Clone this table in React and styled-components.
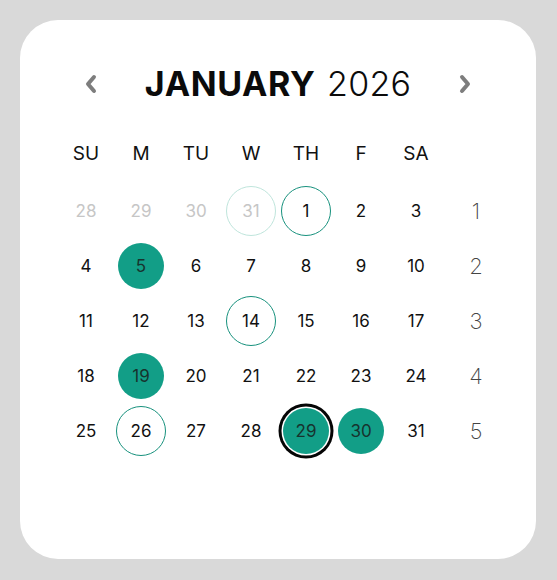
import styled, { createGlobalStyle, css } from 'styled-components';

const GlobalStyle = createGlobalStyle`
    body {
        margin: 0;
        background: #d9d9d9;
        font-family: Inter, "Noto Sans", sans-serif;
    }
`;

const Page = styled.div`
    padding: 20px 21px 21px 20px;
`;

const Card = styled.div`
    width: 516px;
    height: 539px;
    box-sizing: border-box;
    background: #fff;
    border-radius: 38px;
    padding: 44px 0 0 38.5px;
`;

const Header = styled.div`
    display: flex;
    align-items: center;
    justify-content: space-between;
    height: 40px;
    padding: 0 63px 0 24.5px;
`;

const NavButton = styled.button`
    border: 0;
    background: none;
    padding: 0;
    width: 16px;
    height: 22px;
    display: flex;
    align-items: center;
    justify-content: center;
    cursor: pointer;
`;

const Title = styled.h1`
    margin: 0;
    font-size: 34px;
    line-height: 40px;
    color: #0b0b0b;
    font-weight: 300;
    letter-spacing: 0.2px;

    strong {
        font-weight: 700;
        letter-spacing: 0.6px;
        margin-right: 2px;
    }
`;

const Weekdays = styled.div`
    display: grid;
    grid-template-columns: repeat(7, 55px);
    height: 40px;
    margin-top: 29px;
`;

const DayName = styled.div`
    display: flex;
    align-items: center;
    justify-content: center;
    font-size: 19px;
    color: #111;
`;

const Days = styled.div`
    display: grid;
    grid-template-columns: repeat(7, 55px) 65px;
    grid-auto-rows: 55px;
    margin-top: 10.5px;
`;

const Cell = styled.div`
    display: flex;
    align-items: center;
    justify-content: center;
`;

const WeekNum = styled(Cell)`
    font-size: 22px;
    font-weight: 200;
    color: #444;
`;

const Day = styled.div`
    width: 50px;
    height: 50px;
    box-sizing: border-box;
    border-radius: 50%;
    display: flex;
    align-items: center;
    justify-content: center;
    font-size: 17px;
    color: ${p => (p.$muted ? '#c6c6c6' : '#111')};

    ${p => p.$ring && css`
        border: 1.8px solid ${p.$muted ? '#bfe5dc' : '#17917d'};
    `}

    ${p => p.$fill && css`
        width: 46px;
        height: 46px;
        background: #129e87;
        color: #17332e;
    `}

    ${p => p.$today && css`
        box-shadow: 0 0 0 1.5px #fff, 0 0 0 4.5px #050505;
    `}
`;

const Chevron = ({ dir }) => (
    <svg width="14" height="20" viewBox="0 0 14 20">
        <path
            d={dir === 'left' ? 'M10 3 L4 10 L10 17' : 'M4 3 L10 10 L4 17'}
            fill="none"
            stroke="#7d7d7d"
            strokeWidth="4"
            strokeLinecap="round"
            strokeLinejoin="round"
        />
    </svg>
);

const dayNames = ['SU', 'M', 'TU', 'W', 'TH', 'F', 'SA'];

const weeks = [
    [28, 29, 30, 31, 1, 2, 3],
    [4, 5, 6, 7, 8, 9, 10],
    [11, 12, 13, 14, 15, 16, 17],
    [18, 19, 20, 21, 22, 23, 24],
    [25, 26, 27, 28, 29, 30, 31],
];

const filled = [5, 19, 29, 30];
const ringed = [1, 14, 26];

const App = () => {
    return (
        <Page>
            <GlobalStyle />
            <Card>
                <Header>
                    <NavButton aria-label="Previous month"><Chevron dir="left" /></NavButton>
                    <Title><strong>JANUARY</strong> 2026</Title>
                    <NavButton aria-label="Next month"><Chevron dir="right" /></NavButton>
                </Header>

                <Weekdays>
                    {dayNames.map(d => <DayName key={d}>{d}</DayName>)}
                </Weekdays>

                <Days>
                    {weeks.map((week, w) => [
                        ...week.map((n, i) => {
                            const muted = w === 0 && n > 7;
                            return (
                                <Cell key={`${w}-${i}`}>
                                    <Day
                                        $muted={muted}
                                        $fill={!muted && filled.includes(n)}
                                        $ring={(!muted && ringed.includes(n)) || (muted && n === 31)}
                                        $today={!muted && n === 29}
                                    >
                                        {n}
                                    </Day>
                                </Cell>
                            );
                        }),
                        <WeekNum key={`wk-${w}`}>{w + 1}</WeekNum>,
                    ])}
                </Days>
            </Card>
        </Page>
    );
};

export default App;
